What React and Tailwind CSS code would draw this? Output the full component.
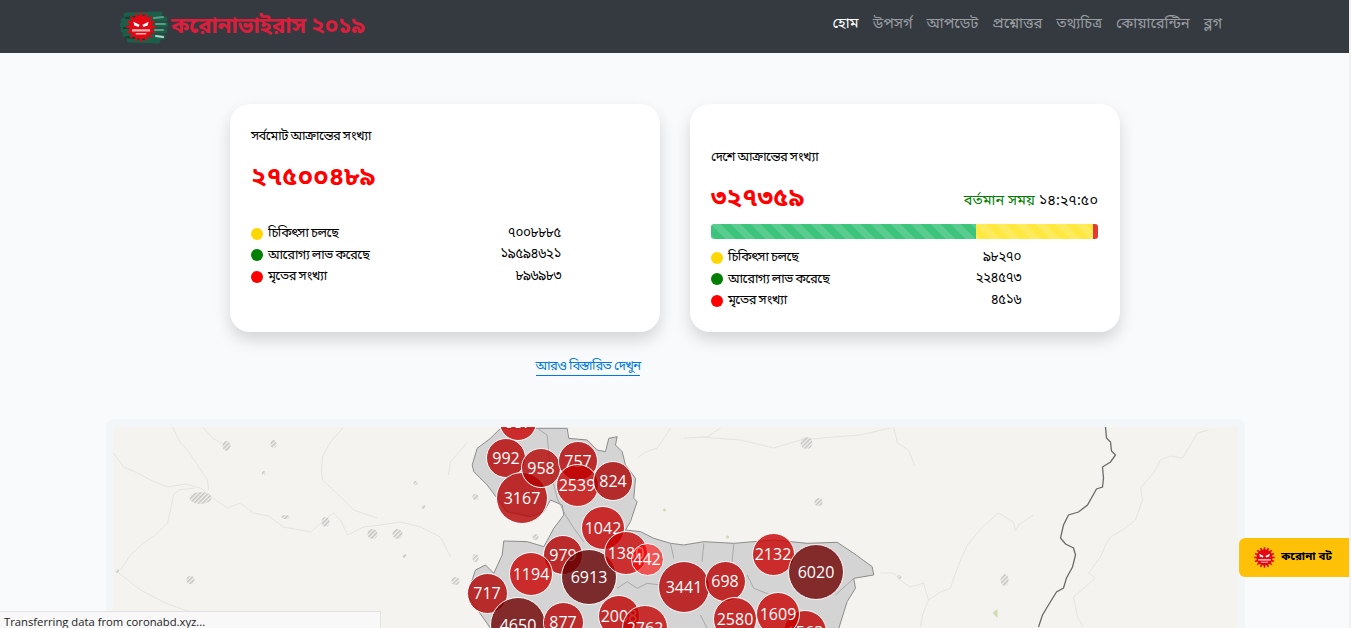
import React from 'react';

const NAV = ['হোম', 'উপসর্গ', 'আপডেট', 'প্রশ্নোত্তর', 'তথ্যচিত্র', 'কোয়ারেন্টিন', 'ব্লগ'];

// order matters: later markers sit on top
const MARKERS = [
  { n: 687, x: 518, y: 422, d: 38, c: 'bg-[rgba(200,0,0,0.8)]' },
  { n: 992, x: 506, y: 458, d: 40, c: 'bg-[rgba(180,0,0,0.8)]' },
  { n: 3167, x: 522, y: 498, d: 52, c: 'bg-[rgba(180,0,0,0.8)]' },
  { n: 958, x: 541, y: 468, d: 40, c: 'bg-[rgba(180,0,0,0.78)]' },
  { n: 757, x: 578, y: 461, d: 40, c: 'bg-[rgba(180,0,0,0.8)]' },
  { n: 2539, x: 577, y: 485, d: 43, c: 'bg-[rgba(195,0,0,0.78)]' },
  { n: 824, x: 613, y: 481, d: 40, c: 'bg-[rgba(170,0,0,0.8)]' },
  { n: 979, x: 563, y: 555, d: 40, c: 'bg-[rgba(180,0,0,0.8)]' },
  { n: 1194, x: 531, y: 574, d: 44, c: 'bg-[rgba(200,0,0,0.8)]' },
  { n: 6913, x: 589, y: 577, d: 56, c: 'bg-[rgba(100,0,0,0.8)]' },
  { n: 1042, x: 603, y: 528, d: 44, c: 'bg-[rgba(195,0,0,0.8)]' },
  { n: 1380, x: 626, y: 553, d: 44, c: 'bg-[rgba(200,0,0,0.78)]' },
  { n: 442, x: 647, y: 559, d: 33, c: 'bg-[rgba(255,0,0,0.6)]' },
  { n: 717, x: 487, y: 593, d: 41, c: 'bg-[rgba(175,0,0,0.8)]' },
  { n: 3441, x: 684, y: 587, d: 52, c: 'bg-[rgba(180,0,0,0.8)]' },
  { n: 698, x: 725, y: 581, d: 41, c: 'bg-[rgba(185,0,0,0.8)]' },
  { n: 2132, x: 773, y: 554, d: 43, c: 'bg-[rgba(200,0,0,0.8)]' },
  { n: 6020, x: 816, y: 572, d: 56, c: 'bg-[rgba(110,0,0,0.8)]' },
  { n: 4650, x: 518, y: 625, d: 56, c: 'bg-[rgba(110,0,0,0.8)]' },
  { n: 877, x: 563, y: 622, d: 41, c: 'bg-[rgba(180,0,0,0.8)]' },
  { n: 2008, x: 619, y: 616, d: 42, c: 'bg-[rgba(190,0,0,0.8)]' },
  { n: 2762, x: 645, y: 628, d: 46, c: 'bg-[rgba(195,0,0,0.78)]' },
  { n: 1563, x: 805, y: 632, d: 44, c: 'bg-[rgba(190,0,0,0.8)]' },
  { n: 2580, x: 735, y: 619, d: 44, c: 'bg-[rgba(190,0,0,0.8)]' },
  { n: 1609, x: 778, y: 614, d: 44, c: 'bg-[rgba(200,0,0,0.8)]' },
];

// town patches: x, y, rx, ry
const HATCH = [
  [200, 498, 11, 6], [226, 446, 4, 5], [273, 444, 3, 4], [190, 580, 4, 4], [325, 522, 4, 5], [372, 534, 5, 5],
  [397, 534, 5, 5], [806, 443, 6, 6], [818, 502, 4, 4], [535, 537, 3, 3], [475, 558, 3, 4], [455, 581, 4, 4],
  [475, 497, 3, 3], [1004, 580, 4, 6], [263, 473, 2, 2], [415, 483, 2, 2], [423, 507, 2, 2], [404, 556, 2, 2],
  [285, 517, 4, 2], [117, 571, 2, 2], [899, 577, 2, 2],
];

const RIVERS = [
  'M113 453L123 467 137 473 150 480 167 487 185 484 200 488 215 500 227 508 240 503 253 513 268 516 283 527 310 532 322 522 333 513 340 520 347 535 363 527 380 525 400 522 420 527 440 537 450 557',
  'M172 427L180 443 187 450 195 462 207 480 208 490',
  'M202 427L212 438 225 445',
  'M195 488L178 490 173 495 170 510 167 523 155 535 143 543 130 555 120 570',
  'M343 427L330 442 322 457 321 470 322 480 338 495 353 510 377 518',
  'M117 572L140 590 165 603 190 612',
  'M1208 430L1197 433 1190 445 1182 458 1170 456 1160 460 1153 473 1140 488 1142 500 1135 520 1122 530 1110 537 1105 545 1100 557 1088 573 1095 578 1073 597 1077 617 1083 627',
  'M1033 515L1018 525 1015 531 1013 522 998 513 982 527 967 545 960 560 955 573 950 588 940 592 928 600 922 615 920 627',
  'M880 573L893 573 902 582 910 587 923 583 928 600',
  'M893 427L897 443 908 450 914 465',
  'M637 458L645 452 657 448 670 428',
  'M683 438L707 437 720 428M700 437L740 440 773 448 800 440 833 437 860 435 890 428',
  'M467 442L450 462 448 475',
];

function Virus({ size, className }) {
  const spikes = Array.from({ length: 16 }, (_, i) => i * 22.5);
  return (
    <svg width={size} height={size} viewBox="0 0 40 40" className={className}>
      {spikes.map((a) => (
        <rect key={a} x="18.5" y="0.5" width="3" height="6" fill="#e30613" transform={`rotate(${a} 20 20)`} />
      ))}
      <circle cx="20" cy="20" r="15.5" fill="#e30613" />
      <path d="M10 13l8 4-1 3-6-2zM30 13l-8 4 1 3 6-2z" fill="#fff" />
      <rect x="8" y="23" width="24" height="3" fill="#f7b6b6" />
      <rect x="13" y="28" width="14" height="2" fill="#f7b6b6" />
    </svg>
  );
}

function Logo() {
  return (
    <div className="relative w-[48px] h-[34px] shrink-0">
      <svg width="48" height="34" viewBox="0 0 48 34" className="absolute inset-0">
        <g fill="none" strokeLinecap="round">
          <path d="M6 5L40 4M3 10L45 9M2 15L46 15M3 20L45 21M5 25L43 27M9 30L38 31" stroke="#1b5e49" strokeWidth="5" />
          <path d="M6 8L24 6M4 18L22 17M6 27L24 29" stroke="#123f31" strokeWidth="2" />
          <path d="M34 8L43 7M36 14L45 14M35 20L43 20" stroke="#5d9c85" strokeWidth="2" />
          <path d="M36 26L43 27" stroke="#b9d6ca" strokeWidth="2" />
        </g>
      </svg>
      <Virus size={30} className="absolute left-[6px] top-[2px]" />
    </div>
  );
}

function Row({ color, label, value }) {
  return (
    <div className="flex items-center h-[21.5px]">
      <span className={`w-3 h-3 rounded-full shrink-0 ${color}`} />
      <span className="ml-[5px] text-[13px] tracking-[-0.6px] text-black">{label}</span>
      <span className="ml-auto w-[80px] text-right text-[13.5px] tracking-[-0.4px] text-black mr-[77px]">{value}</span>
    </div>
  );
}

function Rows({ a, b, c }) {
  return (
    <div>
      <Row color="bg-[#ffd700]" label="চিকিৎসা চলছে" value={a} />
      <Row color="bg-[#008000]" label="আরোগ্য লাভ করেছে" value={b} />
      <Row color="bg-[#ff0000]" label="মৃতের সংখ্যা" value={c} />
    </div>
  );
}

function Card({ children }) {
  return (
    <div className="w-[430px] h-[228px] bg-white rounded-[20px] pl-[21px] pr-[22px] shadow-[0_8px_16px_rgba(0,0,0,0.15)]">
      {children}
    </div>
  );
}

const STRIPES =
  'bg-[length:20px_20px] bg-[linear-gradient(45deg,rgba(255,255,255,0.15)_25%,transparent_25%,transparent_50%,rgba(255,255,255,0.15)_50%,rgba(255,255,255,0.15)_75%,transparent_75%,transparent)]';

function BdMap() {
  return (
    <svg viewBox="113 427 1124 600" className="absolute inset-0 w-full h-full">
      <defs>
        <pattern id="hatch" width="3" height="3" patternUnits="userSpaceOnUse" patternTransform="rotate(45)">
          <rect width="1.6" height="3" fill="#c4c4c2" />
        </pattern>
      </defs>
      <g fill="none" stroke="#e4e4e1" strokeWidth="1">
        {RIVERS.map((d) => (
          <path key={d} d={d} />
        ))}
      </g>
      {/* traced from the crop, so coordinates are 3x around the crop origin */}
      <g transform="translate(440 415) scale(0.3333)">
        <path
          d="M100 170L95 150 110 100 150 70 180 40 380 40 385 70 440 75 470 105 495 110 505 70 530 65 525 90 545 110 555 150 585 190 580 250 590 260 570 320 555 345 600 350 640 370 690 385 730 390 790 380 880 385 940 380 1000 375 1100 385 1190 382 1240 415 1295 455 1300 480 1240 490 1245 520 1220 560 1195 640 1180 800 300 800 150 640 80 540 105 465 135 450 160 475 185 420 190 378 260 380 310 395 340 340 370 300 365 270 330 255 310 290 270 305 200 290 170 250 140 210Z"
          fill="#d4d4d4"
          stroke="#8c8c8c"
          strokeWidth="3"
          strokeLinejoin="round"
        />
        <g fill="none" stroke="#a8a8a8" strokeWidth="3">
          <path d="M290 40L320 60 330 170 350 250 375 300 400 340 430 380" />
          <path d="M530 520L560 500 590 520 620 505 660 510M690 385L700 430M790 385L785 440M880 385L875 440" />
          <path d="M920 480L940 520 990 540M1185 540L1240 490M780 600L800 640" />
        </g>
      </g>
      <path
        d="M1105 427L1106 438 1110 442 1111 451 1115 455 1110 462 1102 467 1103 478 1102 487 1096 489 1087 505 1078 512 1068 515 1063 525 1060 538 1065 544 1073 548 1075 555 1072 567 1066 578 1063 588 1056 592 1048 605 1042 615 1038 627"
        fill="none"
        stroke="#6b6b6b"
        strokeWidth="1.3"
      />
      {HATCH.map(([x, y, rx, ry]) => (
        <ellipse key={`${x}-${y}`} cx={x} cy={y} rx={rx} ry={ry} fill="url(#hatch)" />
      ))}
      <path d="M992 613l5-4v9z" fill="#cfdcae" />
      <circle cx="664" cy="510" r="1.5" fill="#cfdcae" />
      <circle cx="727" cy="537" r="1.5" fill="#cfdcae" />
    </svg>
  );
}

export default function App() {
  return (
    <div className="relative h-screen overflow-hidden bg-[#f9fafc] font-['Noto_Sans_Bengali','Noto_Serif_Bengali','Lohit_Bengali','Liberation_Sans',sans-serif]">
      <nav className="h-[53px] bg-[#343a40] flex items-center pl-[120px] pr-[129px]">
        <Logo />
        <span className="ml-[3px] mt-[3px] text-[22.5px] tracking-[-0.3px] font-bold text-[#dc1e3c]">করোনাভাইরাস ২০১৯</span>
        <div className="ml-auto -mt-[4px] flex gap-[14px] text-[14.8px]">
          {NAV.map((item, i) => (
            <a key={item} className={i === 0 ? 'text-white' : 'text-[#9a9da0]'}>{item}</a>
          ))}
        </div>
      </nav>

      <div className="flex justify-center gap-[30px] mt-[51px] pr-[1px]">
        <Card>
          <p className="pt-[23px] text-[13px] tracking-[-0.6px] leading-[20px] text-black">সর্বমোট আক্রান্তের সংখ্যা</p>
          <p className="mt-[15px] text-[25.5px] leading-[34px] font-bold text-[#ff0000]">২৭৫০০৪৮৯</p>
          <div className="mt-[27px]">
            <Rows a="৭০০৮৮৮৫" b="১৯৫৯৪৬২১" c="৮৯৬৯৮৩" />
          </div>
        </Card>
        <Card>
          <p className="pt-[44px] text-[13px] tracking-[-0.6px] leading-[20px] text-black">দেশে আক্রান্তের সংখ্যা</p>
          <div className="mt-[15px] flex items-center justify-between">
            <span className="text-[25.5px] leading-[34px] font-bold text-[#ff0000]">৩২৭৩৫৯</span>
            <span className="text-[14.5px] mt-[3px]">
              <span className="text-[#008000]">বর্তমান সময়</span> <span className="text-black">১৪:২৭:৫০</span>
            </span>
          </div>
          <div className="mt-[7px] h-[15px] flex rounded-[3px] overflow-hidden">
            <div className={`w-[265px] bg-[#3cc47c] ${STRIPES}`} />
            <div className={`w-[117px] bg-[#ffe83f] ${STRIPES}`} />
            <div className="flex-1 bg-[#e53935]" />
          </div>
          <div className="mt-[8px]">
            <Rows a="৯৮২৭০" b="২২৪৫৭৩" c="৪৫১৬" />
          </div>
        </Card>
      </div>

      <div className="mt-[23px] flex justify-center pr-[175px]">
        <a className="mt-[4px] text-[13px] tracking-[-0.6px] leading-[16px] text-[#007bdb] border-b border-[#007bdb]">আরও বিস্তারিত দেখুন</a>
      </div>

      <section className="mt-[43px] mx-[106px] p-[7px] pt-[8px] bg-[#f3f6f9] rounded-[8px]">
        <div className="relative h-[600px] bg-[#f4f3f0] overflow-hidden">
          <BdMap />
          {MARKERS.map((m) => (
            <div
              key={m.n}
              className={`absolute flex items-center justify-center rounded-full border border-white text-white text-[16px] font-['Open_Sans',sans-serif] ${m.c}`}
              style={{ left: m.x - 113 - m.d / 2, top: m.y - 427 - m.d / 2, width: m.d, height: m.d }}
            >
              {m.n}
            </div>
          ))}
        </div>
      </section>

      <a className="fixed right-[2px] top-[538px] w-[110px] h-[39px] bg-[#ffc107] rounded-l-[6px] flex items-center pl-[15px] gap-[6px]">
        <Virus size={21} />
        <span className="text-[11.5px] font-bold text-black">করোনা বট</span>
      </a>

      <div className="fixed left-0 bottom-0 w-[381px] h-[17px] overflow-hidden bg-[#f8f8f8] border-t border-r border-[#e2e2e2] pl-[4px] text-[11.25px] leading-[20px] text-[#222] font-['Open_Sans',sans-serif]">
        Transferring data from coronabd.xyz...
      </div>

      <div className="fixed right-0 top-0 bottom-0 w-[2px] bg-[#f1f1f1]" />
    </div>
  );
}
